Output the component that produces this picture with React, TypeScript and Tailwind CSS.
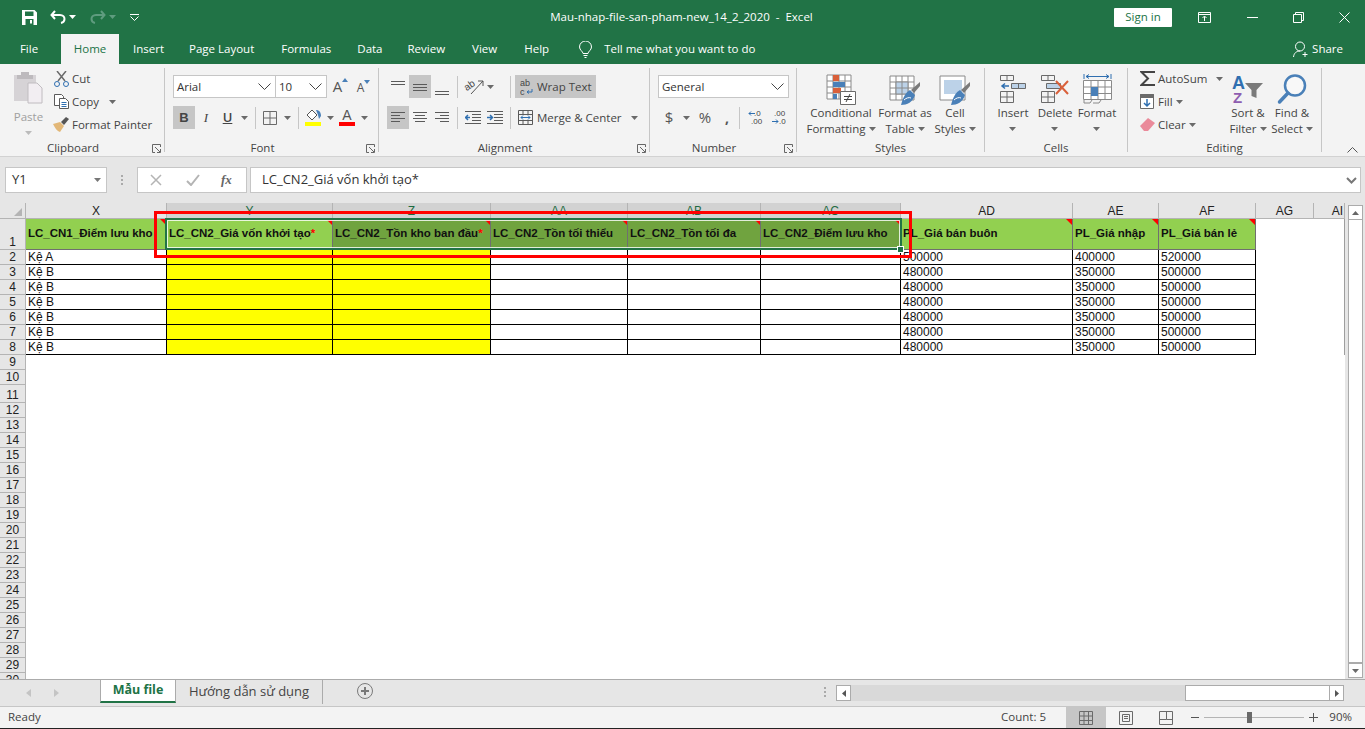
import { ReactNode } from "react";

const SEGOE = "[font-family:'Open_Sans',sans-serif]";

const Caret = ({ className = "" }: { className?: string }) => (
  <svg width="7" height="4" viewBox="0 0 7 4" className={className}>
    <path d="M0 0h7L3.5 4z" fill="#6a6a6a" />
  </svg>
);

const Chevron = () => (
  <svg width="13" height="7" viewBox="0 0 13 7" fill="none" stroke="#444" strokeWidth="1">
    <path d="M0.5 0.5l6 6 6-6" />
  </svg>
);

const Launcher = () => (
  <svg width="9" height="9" viewBox="0 0 9 9" fill="none" stroke="#666" strokeWidth="1">
    <path d="M8.5 3V.5H.5v8H3M3 3l5 5M8.500 5v3.500H5" />
  </svg>
);

const Lines = ({ ys, xs }: { ys: number[]; xs: [number, number][] }) => (
  <svg width="16" height="16" viewBox="0 0 16 16" stroke="#5a5a5a" strokeWidth="1">
    {ys.map((y, i) => (
      <path key={y} d={`M${xs[i][0]} ${y + 0.5}H${xs[i][1]}`} />
    ))}
  </svg>
);

const full: [number, number][] = [[1, 15], [1, 15], [1, 15]];

const Group = ({ className, label, launcher, children }: { className: string; label: string; launcher?: boolean; children: ReactNode }) => (
  <div className={`shrink-0 h-[84px] flex flex-col border-r border-[#c6c6c6] ${className}`}>
    <div className="h-[72px]">{children}</div>
    <div className={`h-[12px] relative flex justify-center leading-[16px] text-[11.5px] text-[#444] ${launcher ? "pr-[18px]" : ""}`}>
      {label}
      {launcher && (
        <span className="absolute right-[3px] top-[4px]">
          <Launcher />
        </span>
      )}
    </div>
  </div>
);

const Sep = ({ className = "" }: { className?: string }) => <div className={`w-px h-[22px] bg-[#c6c6c6] ${className}`} />;

const LargeButton = ({ className, icon, lines, caretOwnLine }: { className: string; icon: ReactNode; lines: ReactNode[]; caretOwnLine?: boolean }) => (
  <div className={`shrink-0 flex flex-col items-center ${className}`}>
    <div className="h-[36px] mt-[3px] flex items-center justify-center">{icon}</div>
    <div className="mt-[-2px] whitespace-nowrap text-center leading-[16px] text-[11.5px] text-[#444]">
      {lines.map((l, i) => (
        <div key={i} className="flex items-center justify-center gap-[3px] h-[16px]">
          {l}
        </div>
      ))}
      {caretOwnLine && (
        <div className="flex items-center justify-center h-[16px]">
          <Caret />
        </div>
      )}
    </div>
  </div>
);

const TableGrid = () => (
  <path d="M1 1h24v24H1zM1 7h24M1 13h24M1 19h24M7 1v24M13 1v24M19 1v24" fill="#fff" stroke="#8a8a8a" strokeWidth="1" />
);

const ConditionalIcon = () => (
  <svg width="30" height="31" viewBox="0 0 30 31">
    <TableGrid />
    <path d="M7 1h6v6H7z" fill="#d9603a" />
    <path d="M7 8h12v5H7z" fill="#4a80b8" />
    <path d="M7 14h8v5H7z" fill="#d9603a" />
    <path d="M7 20h4v5H7z" fill="#4a80b8" />
    <path d="M14.500 17.500h15v13h-15z" fill="#fff" stroke="#6a6a6a" />
    <path d="M18 22.500h8M18 25.500h8M20 28l4-8" stroke="#444" fill="none" />
  </svg>
);

const Brush = () => (
  <g>
    <path d="M31 8l-9 8 3 3 6-7z" fill="#7a7a7a" />
    <path d="M21 16c-4 2-7 7-9 15 6 0 12-3 14-10z" fill="#4a80b8" />
    <path d="M15 26c2-2 5-3 7-2" stroke="#fff" fill="none" />
  </g>
);

const TableStyleIcon = () => (
  <svg width="32" height="31" viewBox="0 0 32 31">
    <g transform="translate(0 1)">
      <TableGrid />
      <path d="M7 7h12v12H7z" fill="#bcd2e8" stroke="#8a8a8a" />
      <path d="M7 13h12M13 7v12" stroke="#8a8a8a" />
    </g>
    <Brush />
  </svg>
);

const CellStyleIcon = () => (
  <svg width="32" height="31" viewBox="0 0 32 31">
    <path d="M1 2h25v24H1z" fill="#fff" stroke="#8a8a8a" />
    <path d="M5 6h18v14H5z" fill="#bcd2e8" />
    <Brush />
  </svg>
);

const InsertIcon = () => (
  <svg width="28" height="30" viewBox="0 0 28 30" fill="none" stroke="#6a6a6a">
    <path d="M1.500 1.500h13v5h-13zM8 1.500v5M1.500 17.500h13v11h-13zM1.500 23h13M8 17.500v11" />
    <path d="M12.500 9.500h14v5h-14zM19.500 9.500v5" fill="#bcd2e8" />
    <path d="M3 12h7M6 9.500L3 12l3 2.500" stroke="#2f6fb0" strokeWidth="1.500" />
  </svg>
);

const DeleteIcon = () => (
  <svg width="30" height="30" viewBox="0 0 30 30" fill="none" stroke="#6a6a6a">
    <path d="M1.500 1.500h13v5h-13zM8 1.500v5M1.500 17.500h13v11h-13zM1.500 23h13M8 17.500v11" />
    <path d="M6.500 9.500h14v5h-14z" fill="#bcd2e8" />
    <path d="M16 7l12 13M28 7L16 20" stroke="#d9603a" strokeWidth="2" />
  </svg>
);

const FormatIcon = () => (
  <svg width="29" height="32" viewBox="0 0 29 32" fill="none" stroke="#8a8a8a">
    <path d="M1 1v5M28 1v5" stroke="#2f6fb0" />
    <path d="M3 3.500h23M3 3.500l3-2M3 3.500l3 2M26 3.500l-3-2M26 3.500l-3 2" stroke="#2f6fb0" />
    <path d="M.5 7.500h28v19H.5zM.5 14h28M.5 20.500h28M8 7.500v19M15 7.500v19M22 7.500v19" fill="#fff" />
    <path d="M8 14h7v9H8z" fill="#4a80b8" stroke="none" />
    <path d="M1 27v3h6l2-3M10 30h6l2-3" />
  </svg>
);

const MagnifierIcon = () => (
  <svg width="30" height="31" viewBox="0 0 30 31" fill="none">
    <circle cx="18" cy="11.500" r="10" stroke="#4a80b8" strokeWidth="2.500" fill="#f8f8f8" />
    <path d="M11 19L2.500 28" stroke="#4a80b8" strokeWidth="3.500" strokeLinecap="round" />
  </svg>
);

const SortIcon = () => (
  <svg width="32" height="31" viewBox="0 0 32 31" className="overflow-visible">
    <text x="0" y="15" fontSize="18" fontWeight="700" fill="#2f6fb0" fontFamily="Liberation Sans">A</text>
    <text x="1" y="29" fontSize="15" fontWeight="700" fill="#8e5db0" fontFamily="Liberation Sans">Z</text>
    <path d="M13 9h18l-6.500 7v8l-5-2v-6z" fill="#7a7a7a" />
  </svg>
);

const SmallAction = ({ icon, label, caret, className = "" }: { icon: ReactNode; label: string; caret?: ReactNode; className?: string }) => (
  <div className={`flex items-center h-[23px] text-[11.5px] text-[#444] whitespace-nowrap ${className}`}>
    <div className="w-[18px] flex justify-center">{icon}</div>
    <span className="ml-[2px]">{label}</span>
    {caret}
  </div>
);

const Ribbon = () => (
  <div className="h-[93px] bg-[#f3f3f3] border-b border-[#d2d2d2] pt-[4px] flex">
    <Group className="w-[165px]" label="Clipboard" launcher>
      <div className="flex">
        <div className="w-[52px] pl-[5px] flex flex-col items-center shrink-0">
          <svg width="30" height="33" viewBox="0 0 30 33" className="mt-[3px] ml-[-2px]">
            <path d="M1 4h22v26H1z" fill="#d6d3d6" />
            <path d="M8 1h8v3h4v4H4V4h4z" fill="#bdbabd" />
            <path d="M15 12h9l5 5v15H15z" fill="#f2eef2" stroke="#c0bcc0" />
          </svg>
          <span className="text-[11.5px] text-[#a0a0a0] leading-[16px] mt-[5px]">Paste</span>
          <Caret className="mt-[6px] opacity-40" />
        </div>
        <div>
          <SmallAction
            className="h-[23px] mt-[-1px]"
            icon={
              <svg width="15" height="16" viewBox="0 0 15 16" fill="none">
                <path d="M3 0l8 10M12 0L4 10" stroke="#6a6a6a" strokeWidth="1.500" />
                <circle cx="3" cy="13" r="2.500" stroke="#2f6fb0" />
                <circle cx="12" cy="13" r="2.500" stroke="#2f6fb0" />
              </svg>
            }
            label="Cut"
          />
          <SmallAction
            icon={
              <svg width="15" height="15" viewBox="0 0 15 15" fill="#fff" stroke="#5a5a5a">
                <path d="M.5.5h7l2 2v9h-9z" />
                <path d="M5.500 4.500h6l3 3v7h-9z" />
                <path d="M7.500 8.500h5M7.500 10.500h5M7.500 12.500h5" stroke="#2f6fb0" />
              </svg>
            }
            label="Copy"
            caret={<Caret className="ml-[10px]" />}
          />
          <SmallAction
            icon={
              <svg width="16" height="15" viewBox="0 0 16 15">
                <path d="M0 7l7-2 4 4-4 6c-3-1-5-4-7-8z" fill="#e2b777" />
                <path d="M8 5l5-5 3 2-5 6z" fill="#555" />
              </svg>
            }
            label="Format Painter"
          />
        </div>
      </div>
    </Group>

    <Group className="w-[214px]" label="Font" launcher>
      <div className="pl-[8px] pt-[7px]">
        <div className="flex items-center h-[23px]">
          <div className="w-[103px] h-[23px] bg-white border border-[#c6c6c6] flex items-center justify-between pl-[3px] pr-[4px] text-[11.5px] text-[#333]">
            Arial
            <Chevron />
          </div>
          <div className="w-[51px] h-[23px] bg-white border border-l-0 border-[#c6c6c6] flex items-center justify-between pl-[3px] pr-[4px] text-[11.5px] text-[#333]">
            10
            <Chevron />
          </div>
          <div className="w-[23px] ml-[2px] flex text-[15px] text-[#555] relative justify-center">
            A
            <svg width="6" height="4" viewBox="0 0 6 4" className="mt-[3px]"><path d="M0 4h6L3 0z" fill="#4a80b8" /></svg>
          </div>
          <div className="w-[23px] flex text-[12px] text-[#555] pt-[2px] justify-center">
            A
            <svg width="6" height="4" viewBox="0 0 6 4" className="mt-[1px]"><path d="M0 0h6L3 4z" fill="#4a80b8" /></svg>
          </div>
        </div>
        <div className="flex items-center h-[23px] mt-[8px]">
          <div className="w-[22px] h-[23px] bg-[#c6c6c6] flex items-center justify-center font-bold text-[13px] text-[#444] [font-family:'Liberation_Sans',sans-serif]">B</div>
          <div className="w-[22px] flex justify-center italic text-[13px] text-[#444] [font-family:'Liberation_Serif',serif]">I</div>
          <div className="w-[21px] flex justify-center underline font-semibold text-[13px] text-[#444]">U</div>
          <div className="w-[12px] flex justify-center"><Caret /></div>
          <Sep className="ml-[5px]" />
          <div className="w-[22px] ml-[3px] flex justify-center">
            <svg width="14" height="14" viewBox="0 0 14 14" fill="none" stroke="#6a6a6a"><path d="M.5.5h13v13H.5zM7 .5v13M.5 7h13" /></svg>
          </div>
          <div className="w-[12px] flex justify-center"><Caret /></div>
          <Sep className="ml-[5px]" />
          <div className="w-[22px] ml-[3px] flex flex-col items-center">
            <svg width="17" height="13" viewBox="0 0 17 13">
              <path d="M2 6l5-5 5 5-5 5z" fill="#fff" stroke="#555" />
              <path d="M11 1c3 0 5 2 5 6l-2 3-1-4z" fill="#4a80b8" />
            </svg>
            <div className="w-[16px] h-[4px] bg-[#ffff00]" />
          </div>
          <div className="w-[12px] flex justify-center"><Caret /></div>
          <div className="w-[22px] flex flex-col items-center leading-[13px] text-[14px] text-[#555] [font-family:'Liberation_Sans',sans-serif]">
            <span className="h-[13px]">A</span>
            <div className="w-[16px] h-[4px] bg-[#ff0000]" />
          </div>
          <div className="w-[12px] flex justify-center"><Caret /></div>
        </div>
      </div>
    </Group>

    <Group className="w-[271px]" label="Alignment" launcher>
      <div className="pl-[8px] pt-[7px]">
        <div className="flex items-center h-[23px]">
          <div className="w-[22px] h-[23px] flex items-start pt-[3px] justify-center"><Lines ys={[3, 6]} xs={full} /></div>
          <div className="w-[22px] h-[23px] bg-[#c6c6c6] flex items-center justify-center"><Lines ys={[5, 8, 11]} xs={full} /></div>
          <div className="w-[22px] h-[23px] flex items-end pb-[1px] justify-center"><Lines ys={[10, 13]} xs={full} /></div>
          <Sep className="ml-[4px]" />
          <div className="w-[52px] flex items-center pl-[7px] gap-[2px]">
            <svg width="20" height="18" viewBox="0 0 20 18" className="overflow-visible">
              <text x="0" y="10" fontSize="10" fill="#444" transform="rotate(-35 6 9)" fontFamily="Liberation Sans">ab</text>
              <path d="M6 16L18 3M13 3h5v5" fill="none" stroke="#555" />
            </svg>
            <Caret />
          </div>
          <Sep />
          <div className="ml-[4px] w-[81px] h-[23px] bg-[#c6c6c6] flex items-center pl-[5px] text-[11.5px] text-[#444] whitespace-nowrap">
            <svg width="14" height="18" viewBox="0 0 14 18">
              <text x="0" y="8" fontSize="9" fill="#444" fontFamily="Liberation Sans">ab</text>
              <text x="0" y="17" fontSize="9" fill="#444" fontFamily="Liberation Sans">c</text>
              <path d="M12 11v3H7M9 12.500L7 14l2 1.500" fill="none" stroke="#2f6fb0" />
            </svg>
            <span className="ml-[3px]">Wrap Text</span>
          </div>
        </div>
        <div className="flex items-center h-[23px] mt-[8px]">
          <div className="w-[22px] h-[23px] bg-[#c6c6c6] flex items-center justify-center"><Lines ys={[2, 5, 8, 11]} xs={[[1, 15], [1, 10], [1, 15], [1, 10]]} /></div>
          <div className="w-[22px] h-[23px] flex items-center justify-center"><Lines ys={[2, 5, 8, 11]} xs={[[1, 15], [3, 13], [1, 15], [3, 13]]} /></div>
          <div className="w-[22px] h-[23px] flex items-center justify-center"><Lines ys={[2, 5, 8, 11]} xs={[[1, 15], [6, 15], [1, 15], [6, 15]]} /></div>
          <Sep className="ml-[4px]" />
          <div className="w-[52px] flex items-center pl-[7px] gap-[6px]">
            <svg width="16" height="13" viewBox="0 0 16 13" fill="none" stroke="#5a5a5a">
              <path d="M0 .5h16M7 3.500h9M7 6.500h9M7 9.500h9M0 12.500h16" />
              <path d="M5 6.500H0M3 4L.5 6.500 3 9" stroke="#2f6fb0" strokeWidth="1.500" />
            </svg>
            <svg width="16" height="13" viewBox="0 0 16 13" fill="none" stroke="#5a5a5a">
              <path d="M0 .5h16M7 3.500h9M7 6.500h9M7 9.500h9M0 12.500h16" />
              <path d="M0 6.500h5M3 4l2.500 2.500L3 9" stroke="#2f6fb0" strokeWidth="1.500" />
            </svg>
          </div>
          <Sep />
          <div className="ml-[7px] flex items-center text-[11.5px] text-[#444] whitespace-nowrap">
            <svg width="15" height="15" viewBox="0 0 15 15" fill="none" stroke="#5a5a5a">
              <path d="M.5.5h14v14H.5zM.5 4.500h14M.5 10.500h14M5 .5v4M10 .5v4M5 10.500v4M10 10.500v4" />
              <path d="M3 7.500h9M5 5.500l-2 2 2 2M10 5.500l2 2-2 2" stroke="#2f6fb0" />
            </svg>
            <span className="ml-[4px]">Merge &amp; Center</span>
            <Caret className="ml-[9px]" />
          </div>
        </div>
      </div>
    </Group>

    <Group className="w-[147px]" label="Number" launcher>
      <div className="pl-[8px] pt-[7px]">
        <div className="w-[131px] h-[23px] bg-white border border-[#c6c6c6] flex items-center justify-between pl-[3px] pr-[4px] text-[11.5px] text-[#333]">
          General
          <Chevron />
        </div>
        <div className="flex items-center h-[23px] mt-[8px] text-[#555]">
          <div className="w-[22px] flex justify-center text-[15px]">$</div>
          <div className="w-[10px] ml-[1px] flex justify-center"><Caret /></div>
          <div className="w-[24px] ml-[2px] flex justify-center text-[15px]">%</div>
          <div className="w-[20px] flex justify-center font-bold text-[14px] leading-[14px]">,</div>
          <Sep className="ml-[2px]" />
          <svg width="16" height="15" viewBox="0 0 16 15" className="ml-[8px]">
            <text x="6" y="6" fontSize="8" fill="#444" fontFamily="Liberation Sans">.0</text>
            <text x="3" y="14" fontSize="8" fill="#444" fontFamily="Liberation Sans">.00</text>
            <path d="M7 3.500H1M3 1.500l-2 2 2 2" fill="none" stroke="#2f6fb0" />
          </svg>
          <svg width="16" height="15" viewBox="0 0 16 15" className="ml-[7px]">
            <text x="3" y="6" fontSize="8" fill="#444" fontFamily="Liberation Sans">.00</text>
            <text x="8" y="14" fontSize="8" fill="#444" fontFamily="Liberation Sans">.0</text>
            <path d="M1 11.500h6M5 9.500l2 2-2 2" fill="none" stroke="#2f6fb0" />
          </svg>
        </div>
      </div>
    </Group>

    <Group className="w-[188px]" label="Styles">
      <div className="flex">
        <LargeButton className="w-[88px]" icon={<ConditionalIcon />} lines={["Conditional", <>Formatting <Caret /></>]} />
        <LargeButton className="w-[40px]" icon={<TableStyleIcon />} lines={["Format as", <>Table <Caret /></>]} />
        <LargeButton className="w-[60px]" icon={<CellStyleIcon />} lines={["Cell", <>Styles <Caret /></>]} />
      </div>
    </Group>

    <Group className="w-[143px]" label="Cells">
      <div className="flex pl-[7px]">
        <LargeButton className="w-[42px]" icon={<InsertIcon />} lines={["Insert"]} caretOwnLine />
        <LargeButton className="w-[42px]" icon={<DeleteIcon />} lines={["Delete"]} caretOwnLine />
        <LargeButton className="w-[42px]" icon={<FormatIcon />} lines={["Format"]} caretOwnLine />
      </div>
    </Group>

    <Group className="w-[194px]" label="Editing">
      <div className="flex pl-[10px]">
        <div className="w-[90px] shrink-0 mt-[-1px]">
          <SmallAction
            icon={
              <svg width="15" height="15" viewBox="0 0 15 15" fill="none" stroke="#444" strokeWidth="2">
                <path d="M14 2V1H1.500L8 7.500 1.500 14H14v-1" />
              </svg>
            }
            label="AutoSum"
            caret={<Caret className="ml-[9px]" />}
          />
          <SmallAction
            icon={
              <svg width="14" height="15" viewBox="0 0 14 15" fill="#fff" stroke="#6a6a6a">
                <path d="M.5.5h13v14H.5z" />
                <path d="M.5.5h13v3H.5z" fill="#6a6a6a" />
                <path d="M7 5v7M4 9l3 3 3-3" fill="none" stroke="#2f6fb0" strokeWidth="1.500" />
              </svg>
            }
            label="Fill"
            caret={<Caret className="ml-[3px]" />}
          />
          <SmallAction
            icon={
              <svg width="15" height="13" viewBox="0 0 15 13">
                <path d="M0 8l8-8 7 5-7 8H4z" fill="#ea8a9a" />
              </svg>
            }
            label="Clear"
            caret={<Caret className="ml-[3px]" />}
          />
        </div>
        <LargeButton className="w-[40px]" icon={<SortIcon />} lines={["Sort &", <>Filter <Caret /></>]} />
        <LargeButton className="w-[48px]" icon={<MagnifierIcon />} lines={["Find &", <>Select <Caret /></>]} />
      </div>
    </Group>

    <div className="flex-1 flex items-end justify-end pr-[7px] pb-[3px]">
      <svg width="11" height="6" viewBox="0 0 11 6" fill="none" stroke="#555"><path d="M.5 5.500l5-5 5 5" /></svg>
    </div>
  </div>
);

const TitleBar = () => (
  <div className="h-[34px] flex bg-[#217346] text-white text-[11.5px]">
    <div className="flex-1 flex items-center pl-[22px]">
      <svg width="15" height="15" viewBox="0 0 15 15">
        <path fillRule="evenodd" fill="#fff" d="M0 0h12.500L15 2.500V15H0zM3 1.500V6h8.500V1.500zM3.500 9v6h8V9zM8 10h2v3.500H8z" />
      </svg>
      <svg width="16" height="14" viewBox="0 0 16 14" fill="none" stroke="#fff" strokeWidth="2" className="ml-[13px]">
        <path d="M5 1L1.500 5 5 9M2 5h8c3 0 4.500 2 4.500 4s-1 3.500-3.500 4" />
      </svg>
      <Caret className="ml-[3px] [&>path]:fill-white" />
      <svg width="16" height="14" viewBox="0 0 16 14" fill="none" stroke="#5f9c7f" strokeWidth="2" className="ml-[14px]">
        <path d="M11 1l3.500 4L11 9M14 5H6C3 5 1.500 7 1.500 9S2.500 12.500 5 13" />
      </svg>
      <Caret className="ml-[3px] [&>path]:fill-[#5f9c7f]" />
      <svg width="9" height="7" viewBox="0 0 9 7" className="ml-[14px]" fill="none" stroke="#fff">
        <path d="M0 .5h9" />
        <path d="M.5 2.500l4 4 4-4" />
      </svg>
    </div>
    <div className="flex items-center mr-[9px]">Mau-nhap-file-san-pham-new_14_2_2020&nbsp; -&nbsp; Excel</div>
    <div className="flex-1 flex items-center justify-end pr-[15px]">
      <div className="w-[58px] h-[19px] bg-white text-[#217346] rounded-[1px] flex items-center justify-center">Sign in</div>
      <svg width="13" height="11" viewBox="0 0 13 11" className="ml-[26px]" fill="none" stroke="#fff">
        <path d="M.5.5h12v10H.5zM.5 2.500h12M6.500 9V4.500M4.500 6l2-2 2 2" />
      </svg>
      <div className="w-[11px] h-px bg-white ml-[36px]" />
      <svg width="11" height="11" viewBox="0 0 11 11" className="ml-[35px]" fill="none" stroke="#fff">
        <path d="M.5 2.500h8v8h-8zM2.500 2.500v-2h8v8h-2" />
      </svg>
      <svg width="11" height="11" viewBox="0 0 11 11" className="ml-[35px]" fill="none" stroke="#fff">
        <path d="M.5.5l10 10M10.500.5l-10 10" />
      </svg>
    </div>
  </div>
);

const TabRow = () => (
  <div className="h-[30px] flex items-stretch bg-[#217346] text-white text-[11.5px] whitespace-nowrap">
    <div className="w-[61px] flex items-center justify-center pr-[3px]">File</div>
    <div className="w-[58px] bg-[#f3f3f3] text-[#217346] flex items-center justify-center">Home</div>
    <div className="flex items-center pl-[14px]">Insert</div>
    <div className="flex items-center pl-[25px]">Page Layout</div>
    <div className="flex items-center pl-[27px]">Formulas</div>
    <div className="flex items-center pl-[26px]">Data</div>
    <div className="flex items-center pl-[25px]">Review</div>
    <div className="flex items-center pl-[27px]">View</div>
    <div className="flex items-center pl-[27px]">Help</div>
    <div className="flex items-center pl-[30px]">
      <svg width="13" height="17" viewBox="0 0 13 17" fill="none" stroke="#fff">
        <path d="M4 12.500c0-2-3.500-3.500-3.500-6.500a6 6 0 0 1 12 0c0 3-3.500 4.500-3.500 6.500zM4.500 14.500h4M5.500 16.500h2" />
      </svg>
      <span className="ml-[12px]">Tell me what you want to do</span>
    </div>
    <div className="flex-1 flex items-center justify-end pr-[22px]">
      <svg width="16" height="17" viewBox="0 0 16 17" fill="none" stroke="#fff">
        <circle cx="7" cy="5.500" r="4.500" />
        <path d="M.5 16c.5-4 3-6 6.500-6M12 11v5M9.500 13.500h5" />
      </svg>
      <span className="ml-[3px]">Share</span>
    </div>
  </div>
);

const FormulaBar = () => (
  <div className="h-[46px] flex pt-[10px] pl-[5px] pr-[4px] text-[13px] text-[#333] bg-[#e6e6e6]">
    <div className="w-[102px] h-[26px] bg-white border border-[#c6c6c6] flex items-center justify-between pl-[6px] pr-[5px]">
      Y1
      <Caret className="[&>path]:fill-[#777]" />
    </div>
    <div className="w-[30px] flex flex-col items-center justify-center gap-[2px] h-[26px]">
      <div className="w-[2px] h-[2px] bg-[#aaa]" />
      <div className="w-[2px] h-[2px] bg-[#aaa]" />
      <div className="w-[2px] h-[2px] bg-[#aaa]" />
    </div>
    <div className="w-[110px] h-[26px] bg-white border border-[#c6c6c6] flex items-center pl-[12px]">
      <svg width="12" height="12" viewBox="0 0 12 12" fill="none" stroke="#b4b4b4" strokeWidth="1.500"><path d="M1 1l10 10M11 1L1 11" /></svg>
      <svg width="14" height="12" viewBox="0 0 14 12" fill="none" stroke="#b4b4b4" strokeWidth="2" className="ml-[24px]"><path d="M1 7l4 4 8-10" /></svg>
      <span className="ml-[21px] italic font-semibold text-[#666] [font-family:'Liberation_Serif',serif]">fx</span>
    </div>
    <div className="flex-1 ml-[3px] h-[26px] bg-white border border-[#c6c6c6] flex items-center justify-between pl-[11px] pr-[3px]">
      <span>LC_CN2_Giá vốn khởi tạo*</span>
      <svg width="11" height="7" viewBox="0 0 11 7" fill="none" stroke="#777" strokeWidth="2"><path d="M1 1l4.500 4.500L10 1" /></svg>
    </div>
  </div>
);

const COLS = ["X", "Y", "Z", "AA", "AB", "AC", "AD", "AE", "AF", "AG", "AI"];
const SELECTED = ["Y", "Z", "AA", "AB", "AC"];

const HEADERS: Record<string, string> = {
  X: "LC_CN1_Điểm lưu kho",
  Y: "LC_CN2_Giá vốn khởi tạo",
  Z: "LC_CN2_Tồn kho ban đầu",
  AA: "LC_CN2_Tồn tối thiểu",
  AB: "LC_CN2_Tồn tối đa",
  AC: "LC_CN2_Điểm lưu kho",
  AD: "PL_Giá bán buôn",
  AE: "PL_Giá nhập",
  AF: "PL_Giá bán lẻ",
};

const DATA_ROWS = [2, 3, 4, 5, 6, 7, 8];
const TABLE_COLS = ["X", "Y", "Z", "AA", "AB", "AC", "AD", "AE", "AF"];

const valueFor = (col: string, row: number) => {
  if (col === "X") return row === 2 ? "Kệ A" : "Kệ B";
  if (col === "AD") return row === 2 ? "500000" : "480000";
  if (col === "AE") return row === 2 ? "400000" : "350000";
  if (col === "AF") return row === 2 ? "520000" : "500000";
  return "";
};

const Comment = () => (
  <span className="absolute top-0 right-0 w-0 h-0 border-t-[6px] border-l-[6px] border-t-[#ff0000] border-l-transparent" />
);

const RowHead = ({ n, className }: { n: number; className: string }) => (
  <div className={`flex items-end justify-center bg-[#e6e6e6] border-b border-r border-[#b4b4b4] text-[#222] text-[12px] leading-[14px] ${className}`}>{n}</div>
);

const Sheet = () => {
  const emptyRows: number[] = [];
  for (let r = 9; r <= 30; r++) emptyRows.push(r);

  return (
    <div className="relative h-[476px] overflow-hidden flex bg-white [font-family:'Liberation_Sans',sans-serif]">
      <div className="w-[1345px] grid grid-cols-[26px_141px_166px_158px_137px_133px_140px_172px_86px_97px_58px_31px] content-start shrink-0 border-r border-[#9e9e9e]">
        {/* column letters */}
        <div className="h-[16px] bg-[#e6e6e6] border-r border-b border-[#b4b4b4] flex items-end justify-end pr-[3px] pb-[2px]">
          <svg width="8" height="8" viewBox="0 0 8 8"><path d="M8 0v8H0z" fill="#b4b4b4" /></svg>
        </div>
        {COLS.map((c) => {
          const sel = SELECTED.includes(c);
          return (
            <div
              key={c}
              className={`h-[16px] border-r border-b border-[#b4b4b4] flex items-center text-[12px] leading-[14px] ${c === "AI" ? "justify-end pr-[1px]" : "justify-center"} ${sel ? "bg-[#d2d2d2] text-[#1e6b42]" : "bg-[#e6e6e6] text-[#222]"}`}
            >
              {c}
            </div>
          );
        })}

        {/* header row */}
        <RowHead n={1} className="h-[31px]" />
        {TABLE_COLS.map((c) => {
          const sel = SELECTED.includes(c) && c !== "Y";
          return (
            <div
              key={c}
              className={`relative h-[31px] border-r border-b border-[#6f6f6f] flex items-center pl-[2px] font-bold text-[11.5px] text-[#111] whitespace-nowrap overflow-hidden ${sel ? "bg-[#70a33f]" : "bg-[#92d050]"}`}
            >
              {HEADERS[c]}
              {(c === "Y" || c === "Z") && <span className="text-[#ff0000]">*</span>}
              <Comment />
            </div>
          );
        })}
        <div className="h-[31px]" />
        <div className="h-[31px]" />

        {/* data rows */}
        {DATA_ROWS.map((r) => (
          <div key={r} className="contents">
            <RowHead n={r} className="h-[15px]" />
            {TABLE_COLS.map((c) => (
              <div
                key={c}
                className={`h-[15px] border-r border-b border-black pl-[2px] text-[12px] leading-[14px] text-[#111] ${c === "Y" || c === "Z" ? "bg-[#ffff00]" : "bg-white"}`}
              >
                {valueFor(c, r)}
              </div>
            ))}
            <div className="h-[15px]" />
            <div className="h-[15px]" />
          </div>
        ))}

        {/* empty rows */}
        {emptyRows.map((r) => (
          <div key={r} className="contents">
            <RowHead n={r} className={r === 11 ? "h-[18px]" : "h-[15px]"} />
            <div className="col-span-11 bg-white" />
          </div>
        ))}
      </div>

      {/* vertical scroll bar */}
      <div className="flex-1 bg-[#e6e6e6] flex flex-col items-center pt-[2px]">
        <div className="w-[15px] h-[15px] bg-white border border-[#ababab] flex items-center justify-center">
          <svg width="7" height="4" viewBox="0 0 7 4"><path d="M0 4h7L3.500 0z" fill="#666" /></svg>
        </div>
        <div className="w-[15px] flex-1 bg-white border-x border-b border-[#ababab]" />
        <div className="w-[15px] h-[15px] mb-px bg-white border border-[#ababab] flex items-center justify-center">
          <Caret />
        </div>
      </div>

      {/* selection border */}
      <div className="absolute left-[165px] top-[15px] w-[737px] h-[32px] border-2 border-[#217346] pointer-events-none">
        <div className="w-full h-full border border-white/80" />
      </div>
      <div className="absolute left-[897px] top-[43px] w-[7px] h-[7px] bg-[#217346] border border-white" />

      {/* red annotation */}
      <div className="absolute left-[154px] top-[8px] w-[758px] h-[47px] border-[3px] border-[#ff0000] pointer-events-none" />
    </div>
  );
};

const TabBar = () => (
  <div className="h-[27px] flex bg-[#e6e6e6] border-t border-[#ababab] text-[13px]">
    <div className="w-[100px] flex items-center pl-[26px] gap-[23px]">
      <svg width="5" height="8" viewBox="0 0 5 8"><path d="M5 0v8L0 4z" fill="#c4c4c4" /></svg>
      <svg width="5" height="8" viewBox="0 0 5 8"><path d="M0 0v8l5-4z" fill="#c4c4c4" /></svg>
    </div>
    <div className="w-[76px] h-[24px] mt-[-1px] bg-white border-x border-t border-[#ababab] border-b-[2px] border-b-[#217346] flex items-center justify-center font-bold text-[12.5px] text-[#217346]">
      Mẫu file
    </div>
    <div className="w-[147px] h-[24px] border-r border-[#ababab] flex items-center justify-center text-[#444]">Hướng dẫn sử dụng</div>
    <div className="w-[50px] flex justify-end items-center h-[24px] mt-[-1px]">
      <svg width="16" height="16" viewBox="0 0 16 16" fill="none" stroke="#7a7a7a">
        <circle cx="8" cy="8" r="7.500" />
        <path d="M4 8h8M8 4v8" strokeWidth="2" />
      </svg>
    </div>
    <div className="w-[455px] flex items-center justify-end h-[24px] pr-[2px]">
      <div className="flex flex-col gap-[2px]">
        <div className="w-[2px] h-[2px] bg-[#aaa]" />
        <div className="w-[2px] h-[2px] bg-[#aaa]" />
        <div className="w-[2px] h-[2px] bg-[#aaa]" />
      </div>
    </div>
    <div className="w-[508px] ml-[8px] mt-[5px] h-[16px] flex bg-[#d9d9d9]">
      <div className="w-[15px] h-[16px] bg-white border border-[#ababab] flex items-center justify-center">
        <svg width="4" height="7" viewBox="0 0 4 7"><path d="M4 0v7L0 3.500z" fill="#555" /></svg>
      </div>
      <div className="w-[334px]" />
      <div className="w-[145px] h-[16px] bg-white border border-[#ababab]" />
      <div className="w-[14px] h-[16px] bg-white border border-l-0 border-[#ababab] flex items-center justify-center">
        <svg width="4" height="7" viewBox="0 0 4 7"><path d="M0 0v7l4-3.500z" fill="#555" /></svg>
      </div>
    </div>
  </div>
);

const StatusBar = () => (
  <div className="h-[23px] flex items-stretch bg-[#f3f3f3] border-t border-[#c6c6c6] border-b border-b-[#222] text-[11.5px] text-[#444]">
    <div className="flex items-center pl-[8px] pb-[1px]">Ready</div>
    <div className="flex-1 flex items-center justify-end pr-[20px] pb-[1px]">Count: 5</div>
    <div className="w-[40px] bg-[#c6c6c6] flex items-center justify-center">
      <svg width="14" height="14" viewBox="0 0 14 14" fill="none" stroke="#6a6a6a"><path d="M.5.5h13v13H.5zM.5 5h13M.5 9.500h13M5 .5v13M9.500.5v13" /></svg>
    </div>
    <div className="w-[40px] flex items-center justify-center">
      <svg width="14" height="14" viewBox="0 0 14 14" fill="none" stroke="#6a6a6a"><path d="M.5.5h13v13H.5zM3.500 3.500h7v7h-7zM5 5.500h4M5 7.500h4" /></svg>
    </div>
    <div className="w-[40px] flex items-center justify-center">
      <svg width="14" height="14" viewBox="0 0 14 14" fill="none" stroke="#6a6a6a"><path d="M.5.500h13v13H.5zM.5 8.500h7v-8M7.500 8.500h6" /></svg>
    </div>
    <div className="w-[20px] flex items-center justify-center ml-[-1px]">
      <div className="w-[8px] h-px bg-[#555]" />
    </div>
    <div className="w-[100px] ml-[-1px] flex items-center relative">
      <div className="w-full h-px bg-[#b4b4b4]" />
      <div className="absolute left-[43px] w-[5px] h-[11px] bg-[#6a6a6a]" />
    </div>
    <div className="w-[16px] ml-[1px] flex items-center justify-center">
      <svg width="9" height="9" viewBox="0 0 9 9" stroke="#555"><path d="M0 4.500h9M4.500 0v9" /></svg>
    </div>
    <div className="w-[44px] flex items-center justify-end pr-[13px] pb-[1px]">90%</div>
  </div>
);

export default function App() {
  return (
    <div className={`w-[1365px] h-[729px] overflow-hidden flex flex-col bg-[#e6e6e6] ${SEGOE}`}>
      <TitleBar />
      <TabRow />
      <Ribbon />
      <FormulaBar />
      <Sheet />
      <TabBar />
      <StatusBar />
    </div>
  );
}
